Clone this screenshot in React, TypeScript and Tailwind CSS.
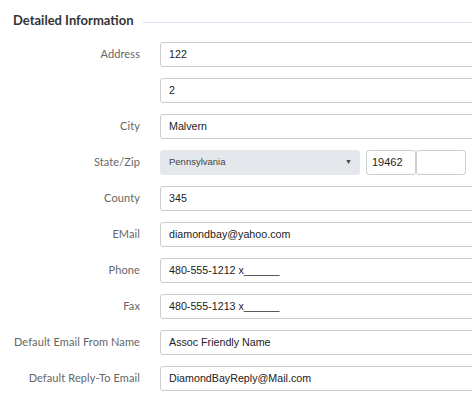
import React from "react"

const labelCls = "w-[140px] shrink-0 text-right text-[11px] tracking-[0.1px] text-[#666] font-['Lato',sans-serif]"
const inputCls =
    "h-[25px] w-[330px] shrink-0 rounded-[3px] border border-[#cccccc] bg-white px-2 text-[10.7px] text-[#222] font-['Liberation_Sans',Arial,sans-serif] outline-none"

function Row({ label, value }: { label: string; value: string }) {
    return (
        <div className="flex items-center gap-5">
            <label className={labelCls}>{label}</label>
            <input className={inputCls} defaultValue={value} readOnly />
        </div>
    )
}

export default function App() {
    return (
        <div className="h-[403px] w-[472px] overflow-hidden bg-white">
            {/* Section header */}
            <div className="flex items-center gap-[10px] pl-[13px] pt-[11px]">
                <h2 className="whitespace-nowrap text-[13px] font-bold text-[#333] font-['Lato',sans-serif]">
                    Detailed Information
                </h2>
                <div className="mt-[3px] h-px flex-1 bg-[#d9e4f0]"></div>
            </div>

            <div className="mt-[11px] flex flex-col gap-[11px]">
                <Row label="Address" value="122" />
                <Row label="" value="2" />
                <Row label="City" value="Malvern" />

                {/* State / Zip */}
                <div className="flex items-center gap-5">
                    <label className={labelCls}>State/Zip</label>
                    <div className="flex items-center">
                        <div className="flex h-[25px] w-[200px] items-center justify-between rounded-[3px] bg-[#e4e7eb] pl-[9px] pr-[8px]">
                            <span className="text-[9.5px] text-[#444] font-['Liberation_Sans',Arial,sans-serif]">Pennsylvania</span>
                            <span className="text-[7px] text-[#444]">▼</span>
                        </div>
                        <input
                            className="ml-[6px] h-[25px] w-[50px] rounded-[3px] border border-[#cccccc] px-[5px] text-[11px] text-[#222] font-['Liberation_Sans',Arial,sans-serif] outline-none"
                            defaultValue="19462"
                            readOnly
                        />
                        <input
                            className="h-[25px] w-[50px] rounded-[3px] border border-[#cccccc] outline-none"
                            readOnly
                        />
                    </div>
                </div>

                <Row label="County" value="345" />
                <Row label="EMail" value="diamondbay@yahoo.com" />
                <Row label="Phone" value="480-555-1212 x______" />
                <Row label="Fax" value="480-555-1213 x______" />
                <Row label="Default Email From Name" value="Assoc Friendly Name" />
                <Row label="Default Reply-To Email" value="DiamondBayReply@Mail.com" />
            </div>
        </div>
    )
}
